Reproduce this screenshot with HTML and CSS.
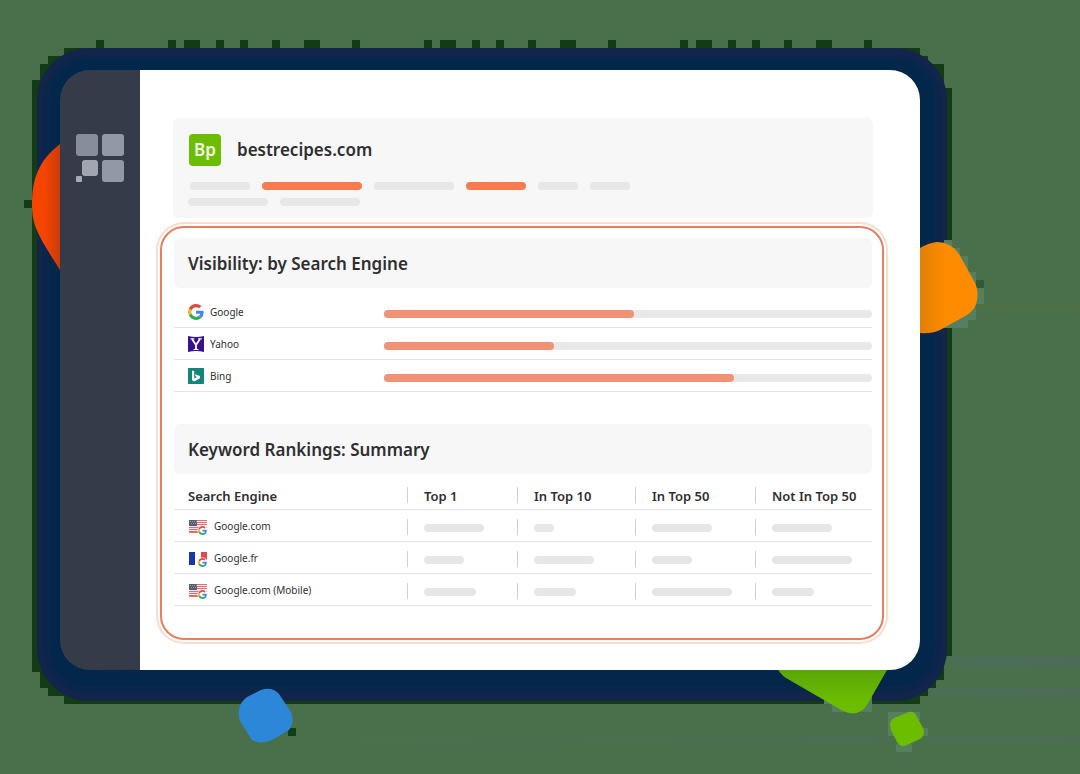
FILE: index.html
```html
<!DOCTYPE html>
<html lang="en">
<head>
<meta charset="utf-8">
<meta name="viewport" content="width=device-width, initial-scale=1">
<title>bestrecipes.com</title>
<link rel="stylesheet" href="styles.css">
</head>
<body>
<svg class="backdrop" viewBox="0 0 1080 774" preserveAspectRatio="none" aria-hidden="true">
  <defs>
    <linearGradient id="red" x1="0" x2="1"><stop offset=".25" stop-color="#f64500"/><stop offset=".6" stop-color="#c83a08"/></linearGradient>
    <linearGradient id="orange" x1="0" x2="1"><stop offset=".2" stop-color="#dc7c05"/><stop offset=".6" stop-color="#ff8c00"/></linearGradient>
    <linearGradient id="green" x1="0" x2="0" y1="0" y2="1"><stop offset="0" stop-color="#559f0c"/><stop offset=".8" stop-color="#6cbd00"/></linearGradient>
    <linearGradient id="haze" x1="0" x2="1"><stop offset="0" stop-color="#4c6c58" stop-opacity="0"/><stop offset="1" stop-color="#4c6c58"/></linearGradient>
  </defs>
  <path fill="url(#haze)" d="M952 656h128v10H952zM928 688h152v8H928zM300 736h590v6H300zM924 736h156v6H924z"/>
  <path fill="#4f7044" d="M978 304h102v6H978z"/>
  <g fill="#123b16" shape-rendering="crispEdges">
    <path d="M64 48H920V56H928V64H944V88H952V656H944V680H936V688H928V696H920V704H64V696H48V688H40V672H32V80H40V64H48V56H64Z"/>
    <path d="M96 40h8v8h-8zM168 40h8v8h-8zM184 40h16v8h-16zM216 40h8v8h-8zM240 40h8v8h-8zM272 40h8v8h-8zM304 40h16v8h-16zM352 40h8v8h-8zM424 40h8v8h-8zM440 40h16v8h-16zM472 40h8v8h-8zM496 40h8v8h-8zM528 40h8v8h-8zM560 40h16v8h-16zM608 40h8v8h-8zM680 40h8v8h-8zM696 40h16v8h-16zM728 40h8v8h-8zM752 40h8v8h-8zM784 40h8v8h-8zM816 40h16v8h-16zM864 40h8v8h-8zM24 200h8v8h-8zM288 728h8v8h-8z"/>
    <path fill="#2f5a3c" d="M976 280h8v8h-8z"/>
  </g>
  <rect x="37" y="48" width="910" height="653" rx="52" fill="#14254c"/>
  <rect x="43" y="55" width="898" height="638" rx="46" fill="#0b264b"/>
  <rect x="49" y="60" width="886" height="626" rx="40" fill="#02274b"/>
  <g fill="#557f60" shape-rendering="crispEdges">
    <path d="M944 240h8v8h-8zM952 248h8v8h-8zM960 256h8v16h-8zM968 272h8v16h-8zM976 288h8v16h-8zM968 304h8v16h-8zM952 312h16v16h-16zM944 320h8v8h-8z"/>
    <path d="M824 696h16v8h-16zM832 704h40v8h-40zM864 696h8v8h-8zM888 712h32v8h-32zM896 744h16v8h-16zM920 728h8v8h-8zM888 720h8v16h-8z"/>
  </g>
  <path fill="url(#red)" d="M60 144C38 161 32 180 32 204C32 225 37 234 60 270H80V130Z"/>
  <path fill="url(#orange)" d="M900 248H920Q928 243 937 242Q951 242 959 254L974 281Q979 290 977 300Q976 309 967 315L940 330Q931 334 920 333H900Z"/>
  <path fill="url(#green)" d="M775 660V665Q780 674 786 678L843 711Q858 718 867 705L887 670V660Z"/>
  <path fill="#2c87d9" d="M247 697L261 690Q272 686 279 694L291 712Q295 722 289 730L272 740Q260 745 252 740L240 721Q235 706 247 697Z"/>
  <path fill="#6cbd00" d="M894 718L909 712Q914 711 916 715L923 728Q926 735 920 739L905 746Q900 747 897 742L891 730Q888 721 894 718Z"/>
</svg>
<svg class="symbols" aria-hidden="true">
  <symbol id="google" viewBox="0 0 48 48">
    <path fill="#dd4b40" d="M24 9.500c3.540 0 6.710 1.220 9.210 3.600l6.850-6.850C35.900 2.380 30.470 0 24 0 14.620 0 6.510 5.380 2.560 13.220l7.980 6.190C12.430 13.720 17.740 9.500 24 9.500z"/>
    <path fill="#4285f4" d="M46.980 24.550c0-1.570-.15-3.090-.38-4.550H24v9.020h12.940c-.58 2.960-2.260 5.480-4.780 7.180l7.730 6c4.510-4.180 7.090-10.360 7.090-17.650z"/>
    <path fill="#f5bb25" d="M10.530 28.590a14.500 14.500 0 0 1 0-9.180l-7.980-6.190a24 24 0 0 0 0 21.560l7.980-6.190z"/>
    <path fill="#34a853" d="M24 48c6.480 0 11.930-2.130 15.890-5.810l-7.730-6c-2.150 1.450-4.920 2.300-8.160 2.300-6.260 0-11.570-4.220-13.470-9.910l-7.980 6.190C6.510 42.620 14.620 48 24 48z"/>
  </symbol>
  <symbol id="us" viewBox="0 0 20 16">
    <path fill="#fbe3e5" d="M1 1h18v13H1z"/>
    <path fill="#e26d77" d="M1 1h18v1H1zM1 3h18v1H1zM1 5h18v1H1zM1 8h18v1H1zM1 10h18v1H1zM1 12h18v2H1z"/>
    <path fill="#536078" d="M1 1h8v6H1z"/>
    <path stroke="#8d98a5" stroke-dasharray="1 1" d="M2 2.500h7M3 4.500h6"/>
    <circle cx="14.500" cy="11.500" r="5" fill="#fff"/>
    <use href="#google" x="10" y="7" width="9" height="9"/>
  </symbol>
  <symbol id="fr" viewBox="0 0 20 16">
    <path fill="#1737ad" d="M1 1h6v13H1z"/><path fill="#e34750" d="M13 1h6v13h-6z"/>
    <circle cx="14.500" cy="11.500" r="5" fill="#fff"/>
    <use href="#google" x="10" y="7" width="9" height="9"/>
  </symbol>
</svg>

<div class="stage">
  <div class="window">
    <aside class="sidebar">
      <svg class="logo" viewBox="0 0 48 48" role="img" aria-label="Dashboard">
        <g fill="#9298a6"><rect width="22" height="22" rx="3" fill="#868d9b"/><rect x="26" width="22" height="22" rx="3"/><rect x="26" y="26" width="22" height="22" rx="3"/><rect x="6" y="26" width="16" height="16" rx="3" fill="#a0a5b1"/><rect y="42" width="6" height="6" rx="1" fill="#a5aab5"/></g>
      </svg>
    </aside>
    <main class="main">
      <header class="site">
        <div class="site-name"><span class="badge">Bp</span><h1>bestrecipes.com</h1></div>
        <div class="pills pills-first"><i class="pill w60"></i><i class="pill w100 hot"></i><i class="pill w80"></i><i class="pill w60 hot"></i><i class="pill w40"></i><i class="pill w40"></i></div>
        <div class="pills"><i class="pill w80"></i><i class="pill w80"></i></div>
      </header>
      <div class="highlight">
        <section>
          <h2>Visibility: by Search Engine</h2>
          <ul class="engines">
            <li><svg class="engine-icon"><use href="#google"/></svg><span>Google</span><div class="track"><div class="fill" style="width:51.2%"></div></div></li>
            <li><svg class="engine-icon" viewBox="0 0 16 16"><path fill="#39128a" d="M0 0Q8 2 16 0V16Q8 14 0 16Z"/><path fill="none" stroke="#fff" stroke-width="1.800" d="M4 3L8 9L12 3M8 8V13"/><path stroke="#fff" d="M2.500 2.800h4M10 2.800h4M5.500 13.500h5"/></svg><span>Yahoo</span><div class="track"><div class="fill" style="width:34.8%"></div></div></li>
            <li><svg class="engine-icon" viewBox="0 0 16 16"><rect width="16" height="16" rx="1" fill="#168579"/><path fill="#fff" d="M4 2.500L6.200 3.300V10.500L9 9L7.700 8.400L6.900 6.300L12 8V10.300L6.200 13.500L4 12.200Z"/></svg><span>Bing</span><div class="track"><div class="fill" style="width:71.7%"></div></div></li>
          </ul>
        </section>
        <section>
          <h2>Keyword Rankings: Summary</h2>
          <table>
            <colgroup><col><col class="c1"><col class="c10"><col class="c50"><col class="cnot"></colgroup>
            <thead><tr><th scope="col">Search Engine</th><th scope="col">Top 1</th><th scope="col">In Top 10</th><th scope="col">In Top 50</th><th scope="col">Not In Top 50</th></tr></thead>
            <tbody>
              <tr><td><div class="domain"><svg class="flag"><use href="#us"/></svg><span>Google.com</span></div></td><td><i class="pill w60"></i></td><td><i class="pill w20"></i></td><td><i class="pill w60"></i></td><td><i class="pill w60"></i></td></tr>
              <tr><td><div class="domain"><svg class="flag"><use href="#fr"/></svg><span>Google.fr</span></div></td><td><i class="pill w40"></i></td><td><i class="pill w60"></i></td><td><i class="pill w40"></i></td><td><i class="pill w80"></i></td></tr>
              <tr><td><div class="domain"><svg class="flag"><use href="#us"/></svg><span>Google.com (Mobile)</span></div></td><td><i class="pill w52"></i></td><td><i class="pill w42"></i></td><td><i class="pill w80"></i></td><td><i class="pill w42"></i></td></tr>
            </tbody>
          </table>
        </section>
      </div>
    </main>
  </div>
</div>
</body>
</html>
```
FILE: styles.css
```css
* { box-sizing: border-box; }
body {
  margin: 0;
  position: relative;
  min-height: 100vh;
  background: #49704a;
  color: #2f2f31;
  font-family: "Noto Sans", "Open Sans", sans-serif;
}
.backdrop { position: absolute; inset: 0; width: 100%; height: 100%; }
.symbols { position: absolute; width: 0; height: 0; }
.stage { position: relative; display: flex; min-height: 100vh; padding: 70px 160px 104px 60px; }
.window { flex: 1; display: flex; border-radius: 30px; overflow: hidden; background: linear-gradient(to right, #353b49 80px, #fff 80px); }
.sidebar { flex: none; width: 80px; padding: 64px 16px; }
.logo { display: block; width: 48px; height: 48px; }
.main { flex: 1; display: flex; flex-direction: column; gap: 8px; min-width: 0; padding: 48px 36px 30px 20px; }

.site { margin: 0 11px 0 13px; padding: 16px 15px 12px; border-radius: 6px; background: #f7f7f7; }
.site-name { display: flex; align-items: center; gap: 16px; margin-bottom: 16px; }
.badge { width: 32px; height: 32px; margin-left: 1px; border-radius: 4px; background: #6cbd00; color: #f4fbe8; font-size: 17px; font-weight: 600; line-height: 32px; text-align: center; }
h1, h2 { margin: 0; font-size: 17px; font-weight: 600; line-height: 24px; }
.pills { display: flex; gap: 12px; }
.pills-first { margin-bottom: 8px; padding-left: 2px; }
.pill { display: block; height: 8px; border-radius: 4px; background: #e7e7e7; }
.hot { background: #fb7b51; }
.w20 { width: 20px; }
.w40 { width: 40px; }
.w42 { width: 42px; }
.w52 { width: 52px; }
.w60 { width: 60px; }
.w80 { width: 80px; }
.w100 { width: 100px; }

.highlight {
  flex: 1;
  display: flex;
  flex-direction: column;
  gap: 32px;
  padding: 10px 10px 32px 12px;
  border: 2px solid #e0815f;
  border-radius: 24px;
  box-shadow: 0 0 0 2px #fff, 0 0 0 4px #fbdcd1;
}
h2 { padding: 14px 14px 12px; border-radius: 6px; background: #f7f7f7; }
.engines { margin: 8px 0 0; padding: 0; list-style: none; font-size: 10px; }
.engines li { display: grid; grid-template-columns: 16px 168px 1fr; column-gap: 6px; align-items: center; height: 32px; padding-left: 14px; border-bottom: 1px solid #e4e4e4; }
.engine-icon { width: 16px; height: 16px; }
.track { height: 8px; margin-top: 4px; border-radius: 4px; background: #e8e8e8; }
.fill { height: 8px; border-radius: 4px; background: #f29275; }

table { width: 100%; margin-top: 4px; table-layout: fixed; border-collapse: separate; border-spacing: 0; font-size: 10px; }
.c1 { width: 110px; }
.c10 { width: 118px; }
.c50 { width: 120px; }
.cnot { width: 117px; }
th, td { height: 32px; padding: 0 0 0 17px; border-bottom: 1px solid #e0e0e0; text-align: left; line-height: 16px; white-space: nowrap; }
th { padding-top: 4px; font-size: 13px; font-weight: 600; }
th:first-child, td:first-child { padding-left: 14px; }
th + th, td + td { background: linear-gradient(#cfcfcf, #cfcfcf) no-repeat left top 9px / 1px 16px; }
td + td { padding-top: 4px; }
.domain { display: flex; align-items: center; gap: 6px; }
.flag { width: 20px; height: 16px; margin-top: 2px; }
```
